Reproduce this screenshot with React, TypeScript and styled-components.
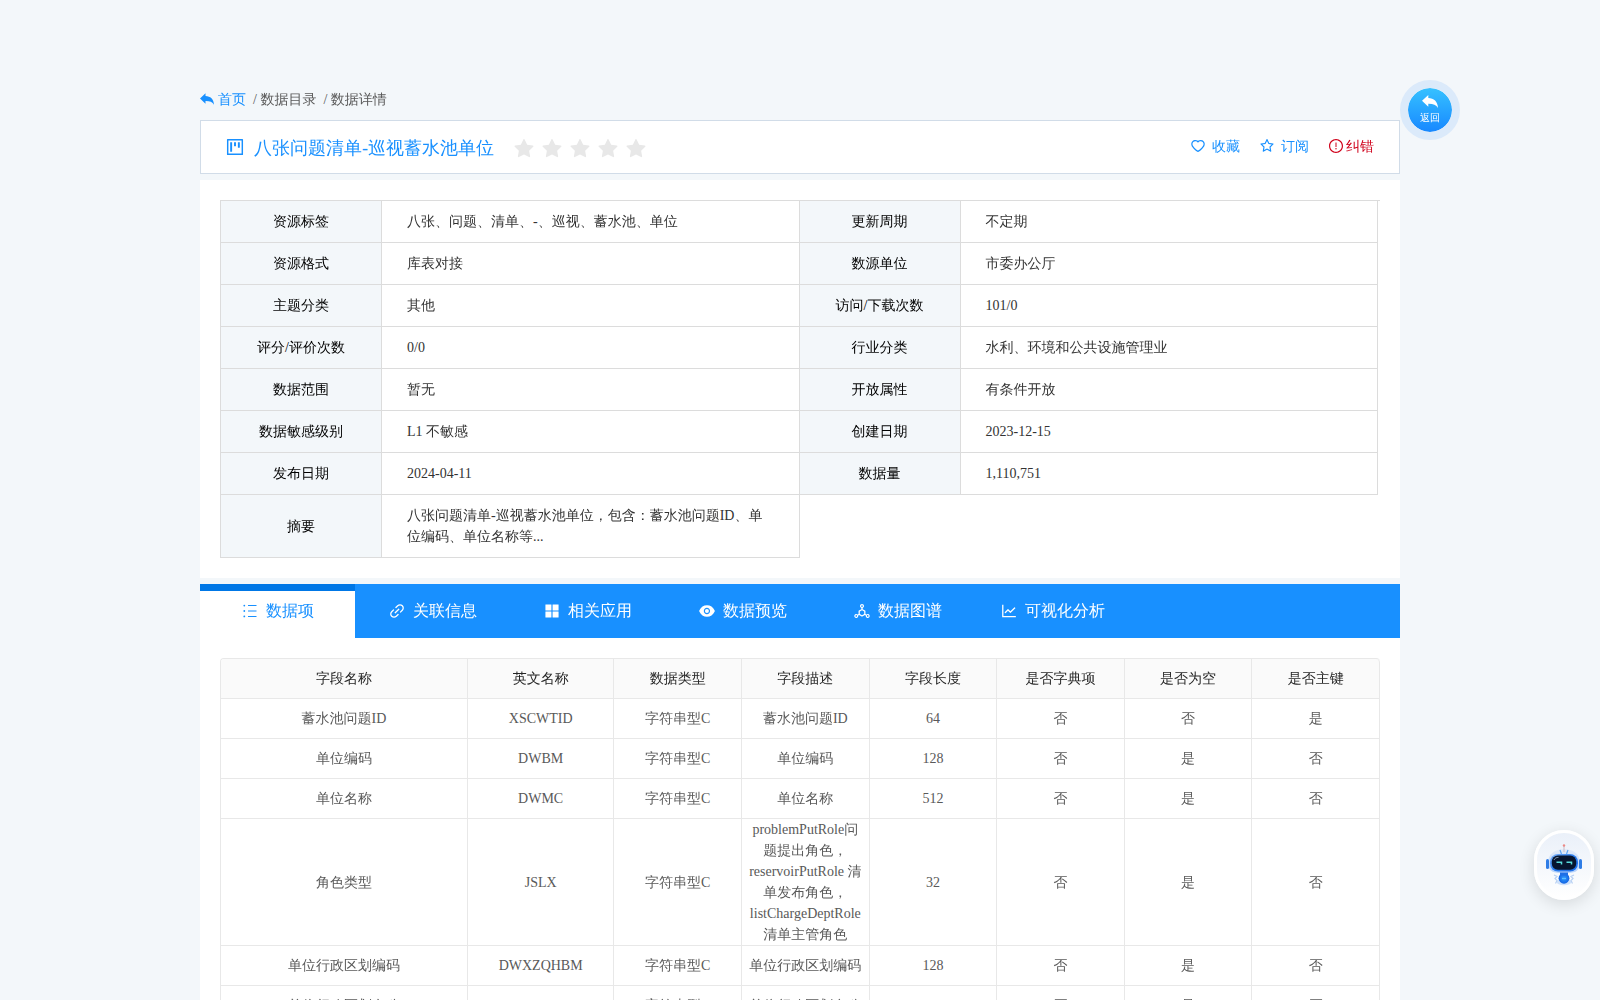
import React from "react";
import styled, { createGlobalStyle } from "styled-components";
import {
  AiFillAppstore,
  AiFillEye,
  AiFillStar,
  AiOutlineDeploymentUnit,
  AiOutlineExclamationCircle,
  AiOutlineHeart,
  AiOutlineLineChart,
  AiOutlineLink,
  AiOutlineProject,
  AiOutlineStar,
} from "react-icons/ai";

const BLUE = "#1890ff";

/* Trims the empty margin that the Ant icons carry around their strokes. */
const ICON_BOX = "64 64 896 896";

const GlobalStyle = createGlobalStyle`
  *, *::before, *::after { box-sizing: border-box; }
  body {
    margin: 0;
    background: #f3f7fa;
    color: #595959;
    font-family: "Liberation Serif", "Droid Sans Fallback", "WenQuanYi Zen Hei", "WenQuanYi Micro Hei", "Noto Sans CJK SC", serif;
    font-size: 14px;
    line-height: 21px;
  }
  button {
    margin: 0;
    padding: 0;
    border: 0;
    background: none;
    color: inherit;
    font: inherit;
    cursor: pointer;
  }
  a { color: inherit; text-decoration: none; }
  svg { display: block; flex: none; }
`;

const Page = styled.main`
  position: relative;
  max-width: 1200px;
  margin: 0 auto;
  padding-top: 80px;
`;

const Breadcrumb = styled.nav`
  display: flex;
  align-items: center;
  gap: 7px;
  height: 40px;
  padding-bottom: 2px;
`;

const HomeLink = styled.a`
  display: flex;
  align-items: center;
  gap: 4px;
  color: ${BLUE};
`;

const TitleBar = styled.header`
  display: flex;
  align-items: center;
  height: 54px;
  padding: 0 25px;
  border: 1px solid #d1dce8;
  background: #fff;
`;

const Title = styled.div`
  display: flex;
  align-items: center;
  gap: 10px;
  margin-right: 20px;
  color: ${BLUE};
`;

const TitleText = styled.h1`
  margin: 0;
  padding-top: 2px;
  font-size: 18px;
  font-weight: 400;
  line-height: 27px;
`;

const Stars = styled.div`
  display: flex;
  gap: 8px;
  padding-top: 4px;
  color: #e8e8e8;
`;

const Actions = styled.div`
  display: flex;
  gap: 20px;
  margin-left: auto;
  padding-bottom: 2px;
`;

const Action = styled.button<{ $danger?: boolean }>`
  display: flex;
  align-items: center;
  gap: ${(p) => (p.$danger ? 3 : 7)}px;
  color: ${(p) => (p.$danger ? "#d0021b" : BLUE)};
`;

const Panel = styled.section`
  padding: 20px;
  background: #fff;
`;

const InfoPanel = styled(Panel)`
  margin: 6px 0;
`;

const InfoList = styled.dl`
  display: grid;
  grid-template-columns: 1fr 1fr;
  margin: 0;
  padding-right: 2px;
  border-top: 1px solid #dcdcdc;
  border-left: 1px solid #dcdcdc;
`;

const InfoItem = styled.div`
  display: flex;
  border: solid #dcdcdc;
  border-width: 0 1px 1px 0;
`;

const InfoLabel = styled.dt`
  display: flex;
  align-items: center;
  justify-content: center;
  flex: none;
  width: 161px;
  border-right: 1px solid #dcdcdc;
  background: #f3f7fa;
  color: #000;
`;

const InfoValue = styled.dd`
  flex: 1;
  margin: 0;
  padding: 10px 25px;
  color: #333;
`;

const Tabs = styled.div`
  display: flex;
  height: 54px;
  background: ${BLUE};
`;

const Tab = styled.button<{ $active?: boolean }>`
  display: flex;
  align-items: center;
  justify-content: center;
  gap: 8px;
  width: 155px;
  border: solid ${(p) => (p.$active ? "#0077e6" : BLUE)};
  border-width: 7px 0 0;
  padding: 0 0 7px 1px;
  background: ${(p) => (p.$active ? "#fff" : BLUE)};
  color: ${(p) => (p.$active ? BLUE : "#fff")};
  font-size: 16px;
  line-height: 24px;
`;

const FieldTable = styled.table`
  width: 100%;
  table-layout: fixed;
  border-collapse: separate;
  border-spacing: 0;
  border: solid #e8e8e8;
  border-width: 1px 0 0 1px;
  border-radius: 4px 4px 0 0;
  overflow: hidden;
`;

const Col = styled.col<{ $width?: string }>`
  width: ${(p) => p.$width || "auto"};
`;

const HeadCell = styled.th`
  height: 40px;
  padding: 0 6px;
  border: solid #e8e8e8;
  border-width: 0 1px 1px 0;
  background: #fafafa;
  color: #262626;
  font-weight: 400;
  &:last-child { border-top-right-radius: 4px; }
`;

const Cell = styled.td`
  height: 40px;
  padding: 0 6px;
  border: solid #e8e8e8;
  border-width: 0 1px 1px 0;
  text-align: center;
`;

const BackButton = styled.button`
  position: absolute;
  top: 80px;
  left: 100%;
  display: flex;
  flex-direction: column;
  align-items: center;
  justify-content: center;
  gap: 2px;
  width: 60px;
  height: 60px;
  border: 8px solid #dbeafa;
  border-radius: 50%;
  background: linear-gradient(#36c1ff, #1788ff) padding-box;
  color: #fff;
  font-size: 10px;
  line-height: 15px;
`;

const Assistant = styled.button`
  position: fixed;
  right: 6px;
  top: 830px;
  display: flex;
  align-items: center;
  justify-content: center;
  width: 60px;
  height: 70px;
  border: 3px solid #fff;
  border-radius: 30px;
  background: linear-gradient(#eaf0f9, #fff);
  box-shadow: 0 4px 16px rgba(0, 0, 0, 0.12);
`;

function ReplyIcon({ width, height }: { width: number; height: number }) {
  return (
    <svg width={width} height={height} viewBox="0 0 16 13" fill="currentColor" aria-hidden="true">
      <path d="M0 5.800 6.300 0v3.100c5.600.2 9.400 3.400 9.700 9.900C14.200 9.900 11 8.700 6.300 8.800v3z" />
    </svg>
  );
}

function ListIcon({ size }: { size?: number; viewBox?: string }) {
  return (
    <svg width={size} height={size} viewBox="0 0 16 16" fill="currentColor" aria-hidden="true">
      <path d="M6 2h8.500v1.100H6zM6 7.400h8.500v1.200H6zM6 12.900h8.500V14H6z" />
      <circle cx="2.300" cy="2.600" r="0.900" />
      <circle cx="2.300" cy="8" r="0.900" />
      <circle cx="2.300" cy="13.400" r="0.900" />
    </svg>
  );
}

function Robot() {
  return (
    <svg width="38" height="44" viewBox="0 0 38 44" aria-hidden="true">
      <defs>
        <linearGradient id="shell" x1="0" y1="0" x2="0" y2="1">
          <stop offset="0" stopColor="#e3ebf8" />
          <stop offset="1" stopColor="#b4d1fb" />
        </linearGradient>
        <linearGradient id="rim" x1="0" y1="0" x2="1" y2="1">
          <stop offset="0" stopColor="#7fb4fb" />
          <stop offset="0.500" stopColor="#2a7df0" />
          <stop offset="1" stopColor="#1a6be6" />
        </linearGradient>
        <radialGradient id="belly">
          <stop offset="0" stopColor="#2f9bff" />
          <stop offset="1" stopColor="#1263e2" />
        </radialGradient>
      </defs>
      <path d="M3 20C3 11 10 6 19 6s16 5 16 14-6 10-16 10S3 29 3 20z" fill="url(#shell)" />
      <path d="M19 3v6" stroke="#c9bcc8" strokeWidth="1" />
      <circle cx="19" cy="2.500" r="1.200" fill="#ec8a86" />
      <path d="M15 7l1.500 4M23 7l-1.500 4" stroke="#5ea6f6" strokeWidth="1.200" />
      <rect x="1" y="16" width="3" height="10" rx="1.500" fill="#2f7de6" />
      <rect x="34" y="16" width="3" height="10" rx="1.500" fill="#2f7de6" />
      <rect x="5" y="11" width="28" height="17.500" rx="8" fill="url(#rim)" />
      <rect x="6.800" y="12.500" width="24.400" height="14.200" rx="6" fill="#07152f" />
      <path d="M9 17c1-2 2.500-2.600 4.500-2.600" stroke="#7b90ab" strokeWidth="1" fill="none" />
      <path d="M11.500 19.300h5v2.200M21.500 19.300h5v2.200" stroke="#57dcdc" strokeWidth="1.500" fill="none" />
      <ellipse cx="19" cy="39" rx="7.500" ry="3.300" fill="#cfe1fa" />
      <path d="M9 32l3 1.500-2 2 2 2-1.500 3M29 32l-3 1.500 2 2-2 2 1.500 3" stroke="#b7d0f3" strokeWidth="1.200" fill="none" />
      <ellipse cx="19" cy="35.300" rx="5.400" ry="5.400" fill="url(#belly)" />
      <path d="M15 29.500h8v3h-8z" fill="#1e6fe6" />
      <path d="M17 35.500h4" stroke="#5fbfff" strokeWidth="1.300" />
    </svg>
  );
}

const INFO: [string, string][] = [
  ["资源标签", "八张、问题、清单、-、巡视、蓄水池、单位"],
  ["更新周期", "不定期"],
  ["资源格式", "库表对接"],
  ["数源单位", "市委办公厅"],
  ["主题分类", "其他"],
  ["访问/下载次数", "101/0"],
  ["评分/评价次数", "0/0"],
  ["行业分类", "水利、环境和公共设施管理业"],
  ["数据范围", "暂无"],
  ["开放属性", "有条件开放"],
  ["数据敏感级别", "L1 不敏感"],
  ["创建日期", "2023-12-15"],
  ["发布日期", "2024-04-11"],
  ["数据量", "1,110,751"],
  ["摘要", "八张问题清单-巡视蓄水池单位，包含：蓄水池问题ID、单位编码、单位名称等..."],
];

const TABS = [
  { label: "数据项", Icon: ListIcon },
  { label: "关联信息", Icon: AiOutlineLink },
  { label: "相关应用", Icon: AiFillAppstore },
  { label: "数据预览", Icon: AiFillEye },
  { label: "数据图谱", Icon: AiOutlineDeploymentUnit },
  { label: "可视化分析", Icon: AiOutlineLineChart },
];

const HEADERS = ["字段名称", "英文名称", "数据类型", "字段描述", "字段长度", "是否字典项", "是否为空", "是否主键"];

const ROWS = [
  ["蓄水池问题ID", "XSCWTID", "字符串型C", "蓄水池问题ID", "64", "否", "否", "是"],
  ["单位编码", "DWBM", "字符串型C", "单位编码", "128", "否", "是", "否"],
  ["单位名称", "DWMC", "字符串型C", "单位名称", "512", "否", "是", "否"],
  [
    "角色类型",
    "JSLX",
    "字符串型C",
    "problemPutRole问题提出角色，reservoirPutRole 清单发布角色，listChargeDeptRole 清单主管角色",
    "32",
    "否",
    "是",
    "否",
  ],
  ["单位行政区划编码", "DWXZQHBM", "字符串型C", "单位行政区划编码", "128", "否", "是", "否"],
  ["单位行政区划名称", "DWXZQHMC", "字符串型C", "单位行政区划名称", "128", "否", "是", "否"],
];

export default function App() {
  return (
    <>
      <GlobalStyle />
      <Page lang="zh-CN">
        <Breadcrumb>
          <HomeLink href="#">
            <ReplyIcon width={14} height={12} />
            首页
          </HomeLink>
          <a href="#">/ 数据目录</a>
          <span>/ 数据详情</span>
        </Breadcrumb>

        <TitleBar>
          <Title>
            <AiOutlineProject size={18} viewBox={ICON_BOX} />
            <TitleText>八张问题清单-巡视蓄水池单位</TitleText>
          </Title>
          <Stars>
            {[1, 2, 3, 4, 5].map((n) => (
              <AiFillStar key={n} size={20} viewBox={ICON_BOX} />
            ))}
          </Stars>
          <Actions>
            <Action>
              <AiOutlineHeart size={14} viewBox={ICON_BOX} />
              收藏
            </Action>
            <Action>
              <AiOutlineStar size={14} viewBox={ICON_BOX} />
              订阅
            </Action>
            <Action $danger>
              <AiOutlineExclamationCircle size={14} viewBox={ICON_BOX} />
              纠错
            </Action>
          </Actions>
        </TitleBar>

        <InfoPanel>
          <InfoList>
            {INFO.map(([label, value]) => (
              <InfoItem key={label}>
                <InfoLabel>{label}</InfoLabel>
                <InfoValue>{value}</InfoValue>
              </InfoItem>
            ))}
          </InfoList>
        </InfoPanel>

        <Tabs>
          {TABS.map(({ label, Icon }, i) => (
            <Tab key={label} $active={i === 0}>
              <Icon size={16} viewBox={ICON_BOX} />
              {label}
            </Tab>
          ))}
        </Tabs>

        <Panel>
          <FieldTable>
            <colgroup>
              <Col $width="21.3%" />
              <Col $width="12.65%" />
              {HEADERS.slice(2).map((h) => (
                <Col key={h} />
              ))}
            </colgroup>
            <thead>
              <tr>
                {HEADERS.map((h) => (
                  <HeadCell key={h}>{h}</HeadCell>
                ))}
              </tr>
            </thead>
            <tbody>
              {ROWS.map((row) => (
                <tr key={row[1]}>
                  {row.map((text, i) => (
                    <Cell key={i}>{text}</Cell>
                  ))}
                </tr>
              ))}
            </tbody>
          </FieldTable>
        </Panel>

        <BackButton>
          <ReplyIcon width={16} height={13} />
          返回
        </BackButton>
      </Page>

      <Assistant aria-label="assistant">
        <Robot />
      </Assistant>
    </>
  );
}
